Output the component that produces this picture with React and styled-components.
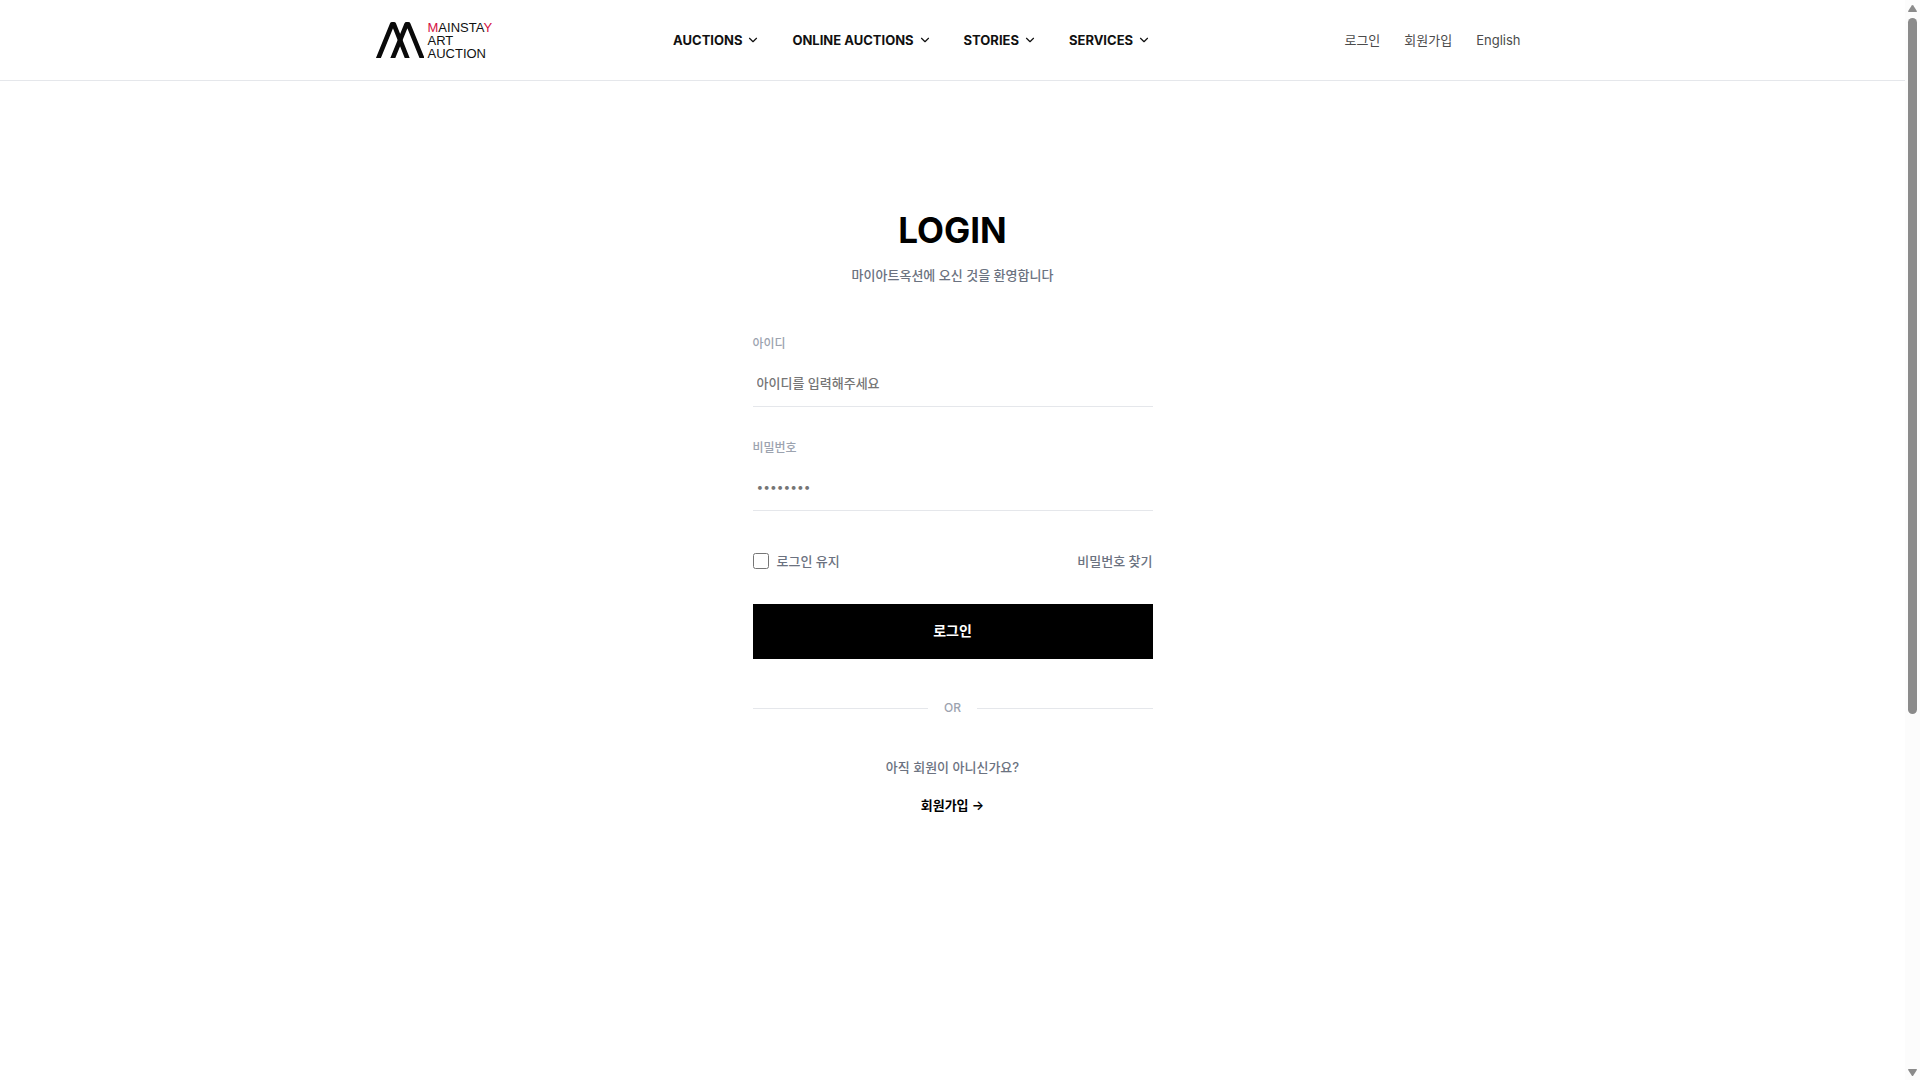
import React from "react";
import styled, { createGlobalStyle } from "styled-components";
import { ChevronDown } from "lucide-react";

const GlobalStyle = createGlobalStyle`
  *, *::before, *::after { box-sizing: border-box; }
  body {
    margin: 0;
    background: #fff;
    color: #000;
    font-family: Inter, "Noto Sans CJK KR", sans-serif;
  }
  a { color: inherit; text-decoration: none; }
`;

const Page = styled.div`
  min-height: 100vh;
  padding-right: 15px;
`;

const Header = styled.header`
  border-bottom: 1px solid #e5e7eb;
`;

const HeaderInner = styled.div`
  display: flex;
  align-items: center;
  gap: 181px;
  max-width: 1200px;
  height: 80px;
  margin: 0 auto;
  padding: 0 32px 0 22px;
`;

const Logo = styled.a`
  display: flex;
  align-items: center;
  gap: 4px;
`;

const LogoText = styled.span`
  display: flex;
  flex-direction: column;
  font-family: "Liberation Sans", sans-serif;
  font-size: 13px;
  line-height: 13px;
  color: #111;
`;

const Red = styled.span`
  color: #d5103f;
`;

const Nav = styled.nav`
  display: flex;
  gap: 32px;
`;

const NavButton = styled.button`
  display: flex;
  align-items: center;
  gap: 4px;
  padding: 0;
  border: 0;
  background: none;
  color: #111;
  font-family: inherit;
  font-size: 13px;
  font-weight: 700;
  line-height: 20px;
  white-space: nowrap;
`;

const UserMenu = styled.div`
  display: flex;
  gap: 24px;
  margin-left: auto;
  color: #4b4b4b;
  font-size: 13px;
  line-height: 20px;
  white-space: nowrap;
`;

const Main = styled.main`
  display: flex;
  flex-direction: column;
  width: 400px;
  max-width: 100%;
  margin: 0 auto;
  padding: 129px 0 64px;
`;

const Title = styled.h1`
  margin: 0 0 15px;
  font-size: 35px;
  font-weight: 700;
  line-height: 40px;
  text-align: center;
`;

const Note = styled.p`
  margin: 0;
  color: #6b7280;
  font-size: 13px;
  font-weight: 500;
  line-height: 20px;
  text-align: center;
`;

const Form = styled.form`
  display: flex;
  flex-direction: column;
  gap: 32px;
  margin: 50px 0 40px;
`;

const Field = styled.div`
  display: flex;
  flex-direction: column;
  gap: 6px;
`;

const FieldLabel = styled.label`
  color: #9ca3af;
  font-size: 12px;
  font-weight: 500;
  line-height: 18px;
`;

const TextInput = styled.input`
  width: 100%;
  height: 48px;
  padding: 0 4px;
  border: 0;
  border-bottom: 1px solid #e5e7eb;
  border-radius: 0;
  outline: none;
  background: transparent;
  font-family: inherit;
  font-size: ${(props) => (props.type === "password" ? "12px" : "13px")};
  font-weight: ${(props) => (props.type === "password" ? 400 : 500)};

  &::placeholder { color: #757575; opacity: 1; }
`;

const Options = styled.div`
  display: flex;
  align-items: center;
  justify-content: space-between;
  margin-top: 7px;
  color: #6b7280;
  font-size: 13px;
  font-weight: 500;
  line-height: 22px;
`;

const Remember = styled.label`
  display: flex;
  align-items: center;
  gap: 8px;
`;

const Checkbox = styled.input`
  width: 16px;
  height: 16px;
  margin: 0;
`;

const Submit = styled.button`
  height: 55px;
  padding: 0 0 4px;
  border: 0;
  background: #000;
  color: #fff;
  font-family: inherit;
  font-size: 14px;
  font-weight: 600;
`;

const Divider = styled.div`
  display: flex;
  align-items: center;
  gap: 16px;
  margin-bottom: 40px;
  color: #9ca3af;
  font-size: 12px;
  font-weight: 500;
  line-height: 18px;

  &::before, &::after {
    content: "";
    flex: 1;
    height: 1px;
    background: #e5e7eb;
  }
`;

const SignUp = styled.a`
  align-self: center;
  margin-top: 18px;
  font-size: 13px;
  font-weight: 600;
  line-height: 20px;
`;

const ScrollTrack = styled.div`
  position: fixed;
  top: 0;
  right: 0;
  bottom: 0;
  display: flex;
  flex-direction: column;
  align-items: center;
  gap: 6px;
  width: 15px;
  padding: 5px 0 4px;
  background: #fcfcfc;
`;

const ScrollThumb = styled.div`
  width: 9px;
  height: 65%;
  margin-bottom: auto;
  border-radius: 5px;
  background: #8b8b8b;
`;

const menus = ["AUCTIONS", "ONLINE AUCTIONS", "STORIES", "SERVICES"];

function LogoMark() {
  return (
    <svg width="49" height="36" viewBox="0 0 49 36" fill="none" stroke="#0a0a0a" strokeWidth="4.6" aria-hidden="true">
      <path d="M2.2 39 17.1 2.4h1.8L33.4 39" strokeLinejoin="round" />
      <path d="M16.6 39 31.5 2.4h1.8L48.2 39" strokeLinejoin="round" />
    </svg>
  );
}

function ScrollArrow({ down }) {
  return (
    <svg width="9" height="7" viewBox="0 0 9 7" fill="#8b8b8b" aria-hidden="true">
      <path d={down ? "M0 .8Q0 0 .8 0h7.4q.8 0 .8.8L5.3 6.4q-.8 1-1.6 0z" : "M0 6.2Q0 7 .8 7h7.4q.8 0 .8-.8L5.3.6q-.8-1-1.6 0z"} />
    </svg>
  );
}

export default function App() {
  return (
    <Page>
      <GlobalStyle />
      <Header>
        <HeaderInner>
          <Logo href="#">
            <LogoMark />
            <LogoText>
              <span><Red>M</Red>AINSTA<Red>Y</Red></span>
              <span>ART</span>
              <span>AUCTION</span>
            </LogoText>
          </Logo>
          <Nav>
            {menus.map((name) => (
              <NavButton key={name} type="button">
                {name}
                <ChevronDown size={14} />
              </NavButton>
            ))}
          </Nav>
          <UserMenu>
            <a href="#">로그인</a>
            <a href="#">회원가입</a>
            <a href="#">English</a>
          </UserMenu>
        </HeaderInner>
      </Header>
      <Main>
        <Title>LOGIN</Title>
        <Note>마이아트옥션에 오신 것을 환영합니다</Note>
        <Form onSubmit={(event) => event.preventDefault()}>
          <Field>
            <FieldLabel htmlFor="user-id">아이디</FieldLabel>
            <TextInput id="user-id" type="text" placeholder="아이디를 입력해주세요" />
          </Field>
          <Field>
            <FieldLabel htmlFor="password">비밀번호</FieldLabel>
            <TextInput id="password" type="password" placeholder="••••••••" />
          </Field>
          <Options>
            <Remember>
              <Checkbox type="checkbox" />
              로그인 유지
            </Remember>
            <a href="#">비밀번호 찾기</a>
          </Options>
          <Submit type="submit">로그인</Submit>
        </Form>
        <Divider>OR</Divider>
        <Note>아직 회원이 아니신가요?</Note>
        <SignUp href="#">회원가입 →</SignUp>
      </Main>
      <ScrollTrack aria-hidden="true">
        <ScrollArrow />
        <ScrollThumb />
        <ScrollArrow down />
      </ScrollTrack>
    </Page>
  );
}
